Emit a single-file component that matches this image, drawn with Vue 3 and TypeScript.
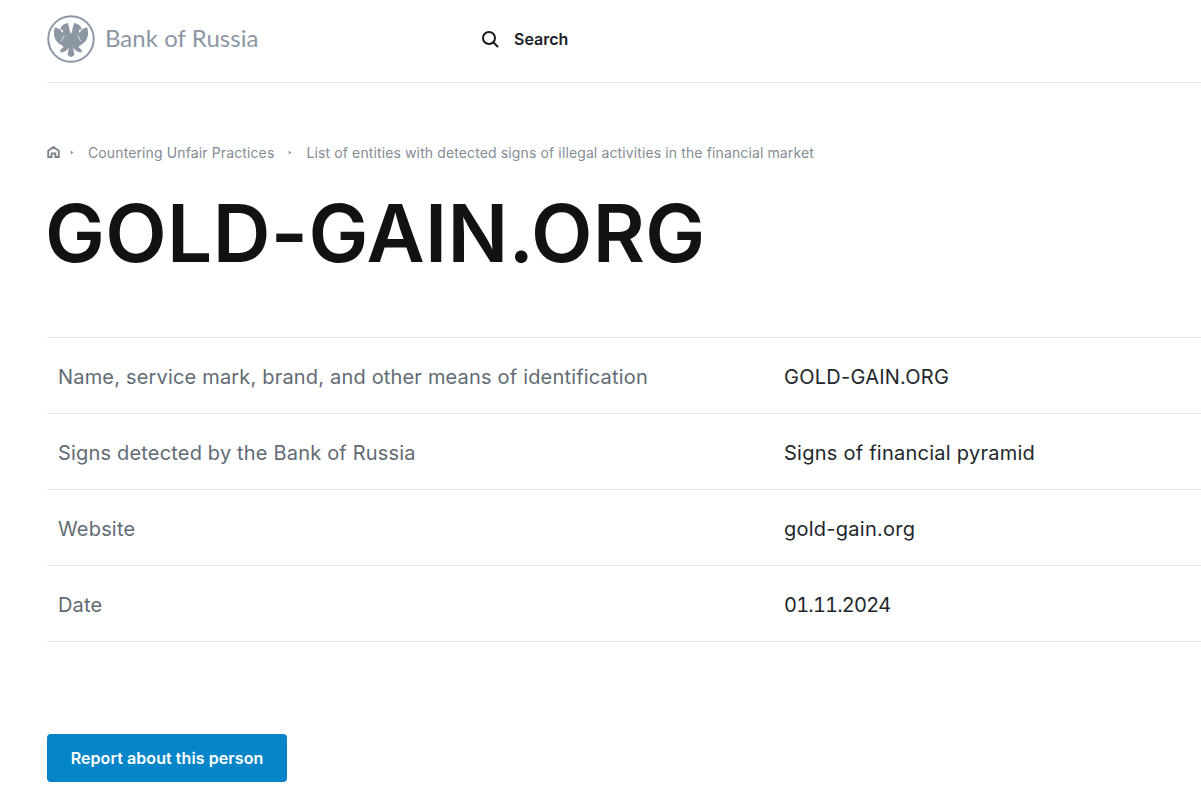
<template>
  <div class="page">
    <header class="header">
      <a class="logo">
        <svg class="emblem" width="48" height="48" viewBox="0 0 49 49">
          <circle cx="24.5" cy="24.5" r="23.2" fill="none" stroke="#8d96a3" stroke-width="2" />
          <path fill="#8d96a3" :d="eagleHalf" />
          <path fill="#8d96a3" :d="eagleHalf" transform="matrix(-1 0 0 1 49 0)" />
          <path d="M24.5 8v10" stroke="#fff" stroke-width="1.2" />
          <path d="M17.5 21 14.5 27M31.5 21 34.5 27" stroke="#fff" stroke-width=".7" fill="none" />
        </svg>
        <span class="logo-text">Bank of Russia</span>
      </a>
      <a class="search">
        <svg width="18" height="18" viewBox="0 0 18 18" fill="none" stroke="#14181f" stroke-width="2">
          <circle cx="8" cy="8" r="6" />
          <path d="m12.5 12.5 4 4" stroke-linecap="round" />
        </svg>
        <span>Search</span>
      </a>
    </header>

    <nav class="crumbs">
      <svg class="home" width="13" height="12" viewBox="0 0 13 12" fill="none" stroke="#7b848c" stroke-width="1.8">
        <path d="M1.2 11V4.8L6.5 1l5.3 3.8V11H8.4V7.5H4.6V11z" />
      </svg>
      <template v-for="item in crumbs" :key="item">
        <svg class="sep" width="4" height="5" viewBox="0 0 4 5"><path d="M.8.5 3.4 2.5.8 4.5z" fill="#8d959c" /></svg>
        <span class="crumb">{{ item }}</span>
      </template>
    </nav>

    <h1 class="title">GOLD-GAIN.ORG</h1>

    <div class="table">
      <div v-for="row in rows" :key="row.label" class="row">
        <div class="label">{{ row.label }}</div>
        <div class="value" :class="{ date: row.isDate }">{{ row.value }}</div>
      </div>
    </div>

    <button class="report" type="button">Report about this person</button>
  </div>
</template>

<script setup lang="ts">
interface Row {
  label: string
  value: string
  isDate?: boolean
}

// left half of the eagle, mirrored in the template
const eagleHalf =
  'M24.5 43C22.5 42 21 41 21 40L22.4 33.5 19.5 36.5 15 38.5 13 36.5 17 32.5 14.5 30.5C11 29 8.5 26 7.5 22 6.8 19 7 16 8 12.5 11 13 14 15 16 18.5 16.5 17 16.6 16 16 15L13.5 15C14 12 16 9.5 19 9L21 8 22 10.5C23 13 22.8 16 24.5 19Z'

const crumbs: string[] = [
  'Countering Unfair Practices',
  'List of entities with detected signs of illegal activities in the financial market',
]

const rows: Row[] = [
  { label: 'Name, service mark, brand, and other means of identification', value: 'GOLD-GAIN.ORG' },
  { label: 'Signs detected by the Bank of Russia', value: 'Signs of financial pyramid' },
  { label: 'Website', value: 'gold-gain.org' },
  { label: 'Date', value: '01.11.2024', isDate: true },
]
</script>

<style>
html,
body {
  margin: 0;
  background: #fff;
  overflow: hidden;
}
</style>

<style scoped>
.page {
  height: 790px;
  padding-left: 47px;
  box-sizing: border-box;
  font-family: Inter, 'Liberation Sans', sans-serif;
  overflow: hidden;
}

.header {
  display: flex;
  align-items: center;
  height: 83px;
  padding-bottom: 4px;
  box-sizing: border-box;
  border-bottom: 1px solid #e3e5e7;
}

.logo {
  display: flex;
  align-items: center;
  width: 434px;
  gap: 10px;
}

.emblem {
  flex: none;
}

.logo-text {
  margin-top: -4px;
  font-family: Lato, 'Liberation Serif', serif;
  font-size: 24px;
  letter-spacing: 0.05px;
  color: #8d96a3;
}

.search {
  display: flex;
  align-items: center;
  gap: 15px;
  font-size: 16px;
  font-weight: 600;
  color: #1b2028;
}

.crumbs {
  display: flex;
  align-items: center;
  margin-top: 60px;
  height: 18px;
  font-size: 14px;
  letter-spacing: 0.12px;
  color: #848c93;
}

.home {
  margin-right: 10px;
}

.sep {
  margin-right: 14px;
}

.crumb {
  margin-right: 14px;
}

.title {
  margin: 24px 0 0 -2px;
  font-size: 80px;
  line-height: 96px;
  font-weight: 600;
  letter-spacing: 0.35px;
  color: #101214;
}

.table {
  margin-top: 56px;
  border-top: 1px solid #e3e5e7;
}

.row {
  display: flex;
  align-items: center;
  height: 73px;
  padding: 2px 0 0 11px;
  border-bottom: 1px solid #e3e5e7;
  font-size: 20px;
}

.label {
  width: 726px;
  color: #626b73;
  letter-spacing: 0.18px;
}

.value {
  color: #22272b;
  letter-spacing: 0.25px;
}

.date {
  font-variant-numeric: tabular-nums;
  letter-spacing: -0.8px;
}

.report {
  display: block;
  margin-top: 92px;
  width: 240px;
  height: 48px;
  padding: 0;
  border: 0;
  border-radius: 4px;
  background: #0686c8;
  color: #fff;
  font-family: inherit;
  font-size: 16px;
  font-weight: 600;
  letter-spacing: 0.08px;
}
</style>
